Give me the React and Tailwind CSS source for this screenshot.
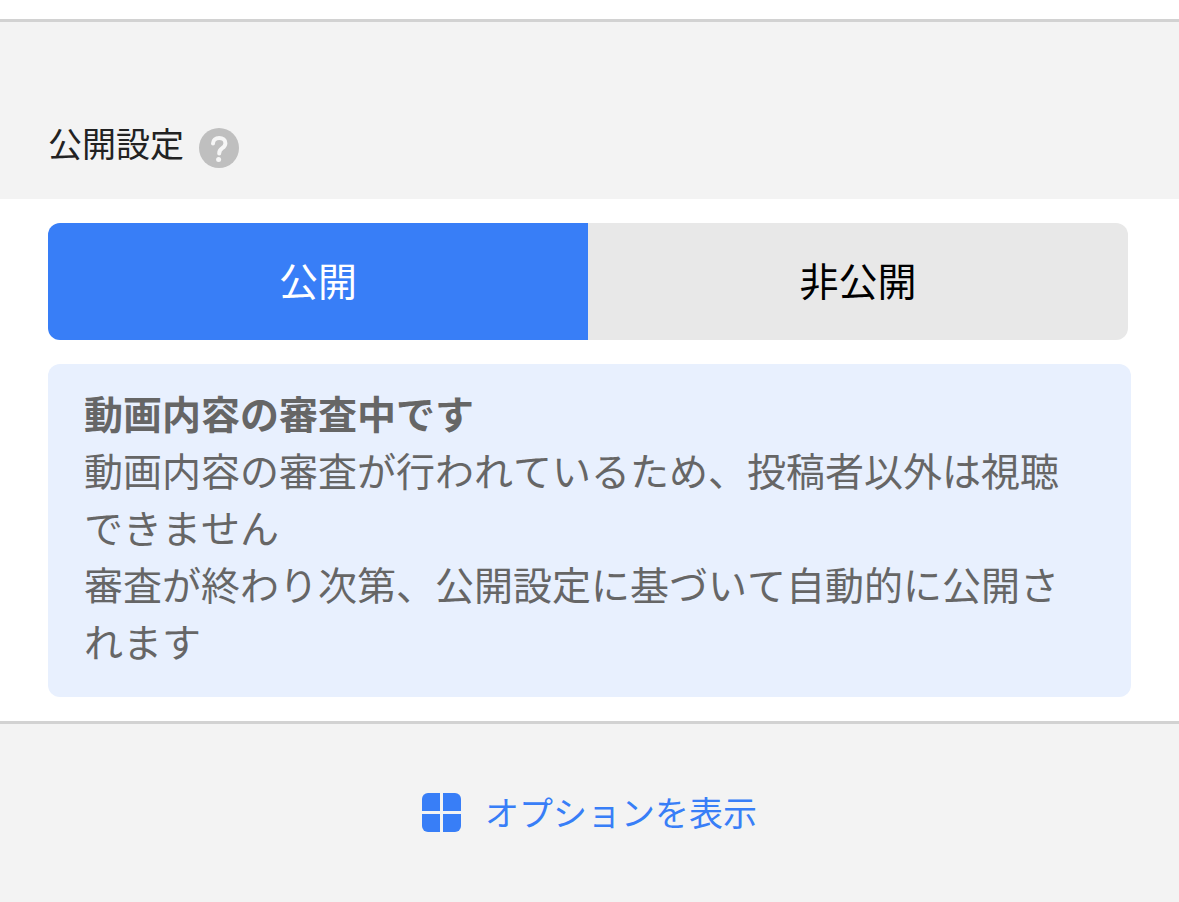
import React, { useState } from 'react';

const options = [
  { value: 'public', label: '公開' },
  { value: 'private', label: '非公開' },
];

const HelpIcon = () => (
  <svg className="h-10 w-10" viewBox="0 0 40 40" fill="none" aria-hidden="true">
    <circle cx="20" cy="20" r="20" fill="#bfbfbf" />
    <path
      d="M14 15.500c0-3.400 2.500-5.500 6.200-5.500 3.600 0 6.200 2 6.200 5.200 0 2.400-1.300 3.700-3.200 5-2 1.400-3 2.400-3 5.200"
      stroke="#f6f6f6"
      strokeWidth="4"
      strokeLinecap="round"
    />
    <circle cx="19.600" cy="31.600" r="2.500" fill="#f6f6f6" />
  </svg>
);

const GridIcon = () => (
  <svg className="h-[39px] w-[39px]" viewBox="0 0 39 39" fill="currentColor" aria-hidden="true">
    <path d="M6 0h12v18H0V6a6 6 0 0 1 6-6z" />
    <path d="M21 0h12a6 6 0 0 1 6 6v12H21z" />
    <path d="M0 21h18v18H6a6 6 0 0 1-6-6z" />
    <path d="M21 21h18v12a6 6 0 0 1-6 6H21z" />
  </svg>
);

const App = () => {
  const [visibility, setVisibility] = useState('public');

  return (
    <div className="min-h-screen bg-[#f3f3f3] font-['Noto_Sans_CJK_JP',sans-serif] text-[#222222] [font-kerning:none]">
      <div className="h-[22px] border-b-3 border-[#d2d2d2] bg-white" />

      <header className="flex h-[177px] items-end gap-[15px] px-12 pb-[31px]">
        <h2 className="text-[34px] leading-[50px]">公開設定</h2>
        <button type="button" aria-label="ヘルプ">
          <HelpIcon />
        </button>
      </header>

      <main className="border-b-3 border-[#d2d2d2] bg-white px-12 py-6">
        <div className="mr-[3px] flex overflow-hidden rounded-xl">
          {options.map(({ value, label }) => (
            <button
              key={value}
              type="button"
              aria-pressed={visibility === value}
              onClick={() => setVisibility(value)}
              className={`h-[117px] flex-1 pb-1 text-[39px] ${
                visibility === value ? 'bg-[#387ef7] text-white' : 'bg-[#e8e8e8] text-black'
              }`}
            >
              {label}
            </button>
          ))}
        </div>

        <section className="mt-6 rounded-xl bg-[#e8f0fe] px-9 pt-5 pb-7 text-[39px] leading-[57px] text-[#666666]">
          <h3 className="font-bold">動画内容の審査中です</h3>
          <p>動画内容の審査が行われているため、投稿者以外は視聴できません</p>
          <p>審査が終わり次第、公開設定に基づいて自動的に公開されます</p>
        </section>
      </main>

      <footer className="flex justify-center pt-16">
        <button type="button" className="flex items-center gap-6 text-[34px] leading-[48px] text-[#387ef7]">
          <GridIcon />
          オプションを表示
        </button>
      </footer>
    </div>
  );
};

export default App;
